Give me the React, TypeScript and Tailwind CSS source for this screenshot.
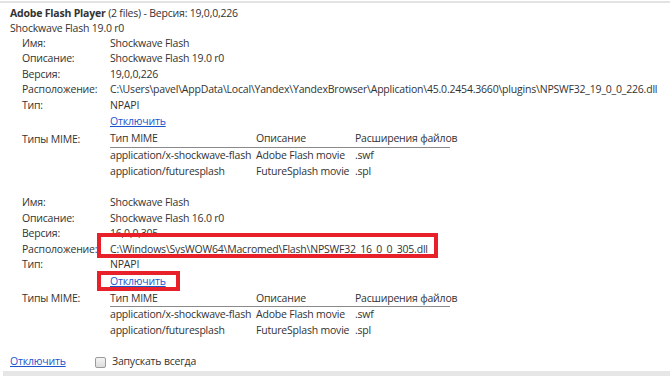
import React from "react";

const mime = [
  ["application/x-shockwave-flash", "Adobe Flash movie", ".swf"],
  ["application/futuresplash", "FutureSplash movie", ".spl"],
];

function Row({ label, children }: { label: string; children: React.ReactNode }) {
  return (
    <div className="flex h-[15.5px] items-center">
      <div className="w-[88px] shrink-0">{label}</div>
      <div className="whitespace-nowrap">{children}</div>
    </div>
  );
}

function MimeTable() {
  return (
    <div className="flex">
      <div className="w-[88px] shrink-0 h-[16px] flex items-center">Типы MIME:</div>
      <div className="w-[340px]">
        <div className="flex h-[16px] items-center border-b border-[#8a8a8a]">
          <div className="w-[146px] shrink-0">Тип MIME</div>
          <div className="w-[99px] shrink-0">Описание</div>
          <div>Расширения файлов</div>
        </div>
        {mime.map((m) => (
          <div key={m[0]} className="flex h-[16px] items-center">
            <div className="w-[146px] shrink-0">{m[0]}</div>
            <div className="w-[99px] shrink-0">{m[1]}</div>
            <div>{m[2]}</div>
          </div>
        ))}
      </div>
    </div>
  );
}

function Link() {
  return <span className="text-[#1a55cc] underline">Отключить</span>;
}

function Block(props: { desc: string; ver: string; path: string }) {
  return (
    <div className="pl-[12px]">
      <Row label="Имя:">Shockwave Flash</Row>
      <Row label="Описание:">{props.desc}</Row>
      <Row label="Версия:">{props.ver}</Row>
      <Row label="Расположение:">{props.path}</Row>
      <Row label="Тип:">NPAPI</Row>
      <div className="flex h-[17px] items-center">
        <div className="w-[88px] shrink-0" />
        <Link />
      </div>
      <div className="h-[1px]" />
      <MimeTable />
    </div>
  );
}

export default function App() {
  return (
    <div
      className="relative w-[670px] h-[376px] bg-white overflow-hidden text-[10.5px] tracking-[-0.2px] text-[#333] whitespace-nowrap"
      style={{ fontFamily: '"Open Sans", "Noto Sans", sans-serif' }}
    >
      <div className="h-[1px]" />
      <div className="h-[2px] bg-[#e3e3e3]" />
      <div className="pl-[10px]">
        <div className="h-[16px] mt-[3px] flex items-center">
          <span className="font-bold">Adobe Flash Player</span>
          <span>&nbsp;(2 files) - Версия: 19,0,0,226</span>
        </div>
        <div className="h-[13px] flex items-center">Shockwave Flash 19.0 r0</div>
        <div className="h-[1px]" />
        <Block
          desc="Shockwave Flash 19.0 r0"
          ver="19,0,0,226"
          path="C:\Users\pavel\AppData\Local\Yandex\YandexBrowser\Application\45.0.2454.3660\plugins\NPSWF32_19_0_0_226.dll"
        />
        <div className="h-[16px]" />
        <Block
          desc="Shockwave Flash 16.0 r0"
          ver="16,0,0,305"
          path="C:\Windows\SysWOW64\Macromed\Flash\NPSWF32_16_0_0_305.dll"
        />
        <div className="h-[15px]" />
        <div className="flex h-[16px] items-center">
          <div className="w-[85px]">
            <Link />
          </div>
          <span className="w-[11px] h-[11px] border border-[#9a9a9a] rounded-[2px] bg-gradient-to-b from-[#f4f4f4] to-[#dcdcdc] mr-[6px]" />
          <span>Запускать всегда</span>
        </div>
      </div>
      <div className="absolute left-[3px] right-0 top-[371px] h-[5px] bg-[#e6e6e6]" />
      <div className="absolute left-[97px] top-[233px] w-[341px] h-[25px] border-[4px] border-[#e8202a]" />
      <div className="absolute left-[97px] top-[271px] w-[83px] h-[20px] border-[4px] border-[#e8202a]" />
    </div>
  );
}
